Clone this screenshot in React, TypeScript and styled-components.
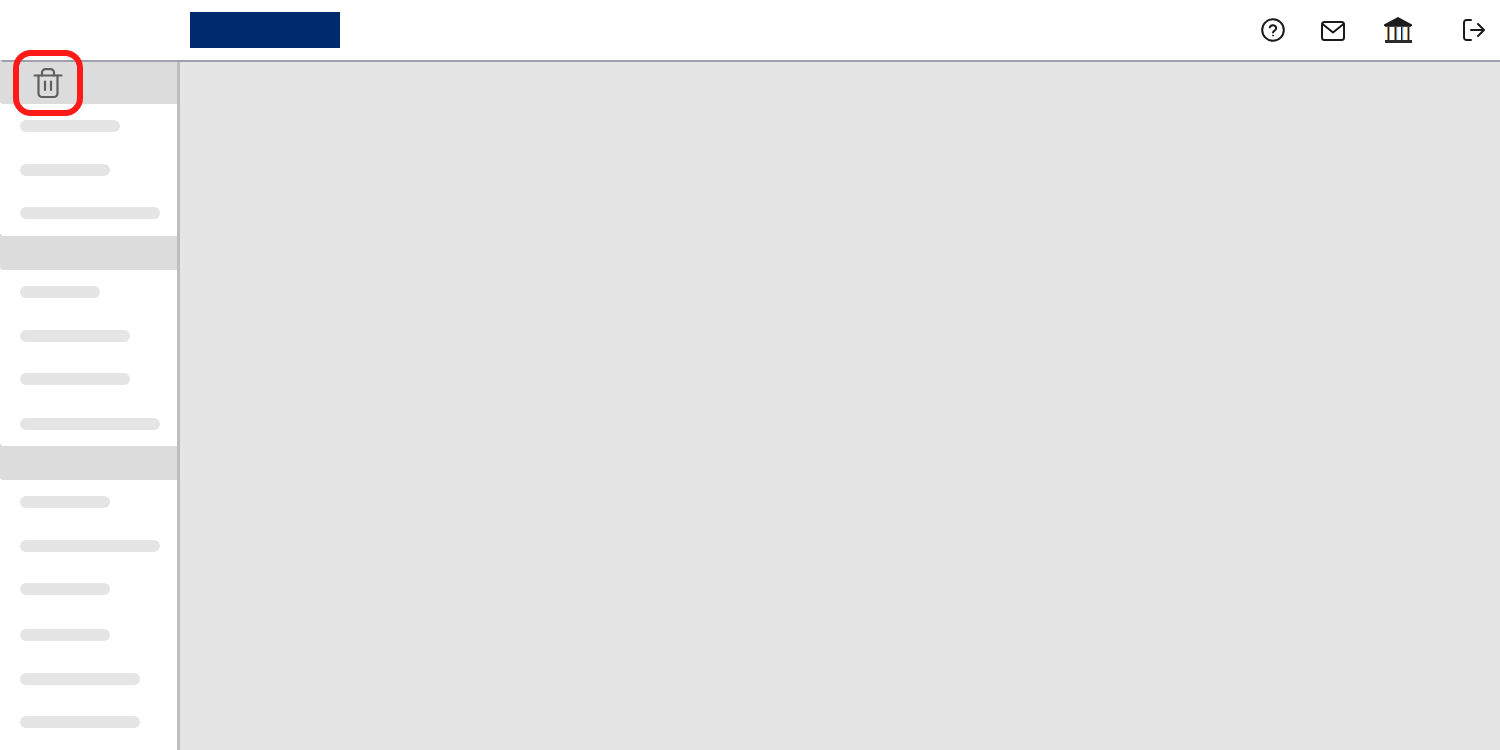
import React from 'react';
import styled, { createGlobalStyle } from 'styled-components';

const GlobalStyle = createGlobalStyle`
  html, body {
    margin: 0;
    padding: 0;
    height: 100%;
    overflow: hidden;
    background: #fff;
    font-family: "Liberation Sans", Arial, sans-serif;
  }
`;

type NavItem = { kind: 'section'; height: number; top: number } | { kind: 'bar'; width: number; top: number };

// top = space left above the item, taken from the previous item
const navItems: NavItem[] = [
  { kind: 'section', height: 42, top: 0 },
  { kind: 'bar', width: 100, top: 16 },
  { kind: 'bar', width: 90, top: 32 },
  { kind: 'bar', width: 140, top: 31 },
  { kind: 'section', height: 34, top: 17 },
  { kind: 'bar', width: 80, top: 16 },
  { kind: 'bar', width: 110, top: 32 },
  { kind: 'bar', width: 110, top: 31 },
  { kind: 'bar', width: 140, top: 33 },
  { kind: 'section', height: 34, top: 16 },
  { kind: 'bar', width: 90, top: 16 },
  { kind: 'bar', width: 140, top: 32 },
  { kind: 'bar', width: 90, top: 31 },
  { kind: 'bar', width: 90, top: 34 },
  { kind: 'bar', width: 120, top: 32 },
  { kind: 'bar', width: 120, top: 31 },
];

const Page = styled.div`
  position: relative;
  width: 1500px;
  height: 750px;
  display: flex;
  flex-direction: column;
  overflow: hidden;
`;

const Header = styled.header`
  flex: none;
  height: 60px;
  display: flex;
  align-items: center;
  padding-left: 190px;
  background: #fff;
  border-bottom: 2px solid #9ca3af;
`;

const Logo = styled.div`
  width: 150px;
  height: 36px;
  background: #002a6e;
`;

const HeaderIcons = styled.div`
  margin-left: auto;
  display: flex;
  align-items: center;
  height: 100%;
`;

const IconSlot = styled.div<{ $width: number; $gap: number }>`
  width: ${(p) => p.$width}px;
  margin-right: ${(p) => p.$gap}px;
  display: flex;
  justify-content: center;
  color: #1a1a1a;
`;

const Body = styled.div`
  flex: 1;
  display: flex;
  min-height: 0;
`;

const Sidebar = styled.nav`
  flex: none;
  width: 177px;
  background: #fff;
  border-right: 3px solid #bdbdbd;
  display: flex;
  flex-direction: column;
`;

const Section = styled.div<{ $height: number; $top: number }>`
  position: relative;
  flex: none;
  height: ${(p) => p.$height}px;
  margin-top: ${(p) => p.$top}px;
  background: #dcdcdc;
  border-radius: 0 0 0 3px;

  &::before {
    content: '';
    position: absolute;
    left: 0;
    top: -2px;
    width: 2px;
    height: 2px;
    background: linear-gradient(to top right, #dcdcdc 50%, transparent 50%);
  }
`;

const Bar = styled.div<{ $width: number; $top: number }>`
  flex: none;
  width: ${(p) => p.$width}px;
  height: 12px;
  margin-top: ${(p) => p.$top}px;
  margin-left: 20px;
  background: #e5e5e5;
  border-radius: 6px;
`;

const Main = styled.main`
  flex: 1;
  background: #e5e5e5;
`;

const TrashHighlight = styled.div`
  position: absolute;
  left: 13px;
  top: 50px;
  width: 58px;
  height: 54px;
  border: 6px solid #ff1a1a;
  border-radius: 18px;
  display: flex;
  align-items: center;
  justify-content: center;
  color: #5f5f5f;
`;

const QuestionIcon = () => (
  <svg width="26" height="26" viewBox="0 0 26 26" fill="none" stroke="currentColor" strokeWidth="2" strokeLinecap="round">
    <circle cx="13" cy="13" r="10.800" />
    <path d="M9.800 10.400a3.300 3.300 0 0 1 6.400 .9c0 2.100-3.200 2.500-3.200 4.300" />
    <circle cx="13" cy="18.600" r="0.500" fill="currentColor" strokeWidth="1" />
  </svg>
);

const MailIcon = () => (
  <svg width="24" height="22" viewBox="0 0 24 22" fill="none" stroke="currentColor" strokeWidth="2" strokeLinejoin="round" strokeLinecap="round">
    <rect x="1" y="3" width="22" height="18" rx="2.500" />
    <path d="M1.500 5 12 13.500 22.500 5" />
  </svg>
);

const BankIcon = () => (
  <svg width="28" height="28" viewBox="0 0 28 28">
    <path d="M14 1 28 8.500V10H0V8.500Z" fill="#1c1c1c" />
    <rect x="1" y="10" width="26" height="1" fill="#444" />
    <g>
      <rect x="3" y="11" width="1" height="13" fill="#d08a3c" />
      <rect x="4" y="11" width="1.400" height="13" fill="#222" />
      <rect x="10" y="11" width="1" height="13" fill="#d08a3c" />
      <rect x="11" y="11" width="1.400" height="13" fill="#222" />
      <rect x="12.400" y="11" width="0.800" height="13" fill="#3f8fd0" />
      <rect x="17" y="11" width="1.400" height="13" fill="#222" />
      <rect x="18.400" y="11" width="0.800" height="13" fill="#3f8fd0" />
      <rect x="23" y="11" width="1" height="13" fill="#d08a3c" />
      <rect x="24" y="11" width="1.400" height="13" fill="#222" />
    </g>
    <rect x="1" y="24" width="27" height="3" fill="#2b2b2b" />
  </svg>
);

const LogoutIcon = () => (
  <svg width="22" height="24" viewBox="0 0 22 24" fill="none" stroke="currentColor" strokeWidth="2" strokeLinecap="round" strokeLinejoin="round">
    <path d="M8 2H3.500A2.500 2.500 0 0 0 1 4.500v15A2.500 2.500 0 0 0 3.500 22H8" />
    <path d="M8 12h12.800M15 6l6 6-6 6" />
  </svg>
);

const TrashIcon = () => (
  <svg width="30" height="30" viewBox="-0.500 0 30 30" fill="none" stroke="currentColor" strokeWidth="2.200" strokeLinecap="round" strokeLinejoin="round">
    <path d="M1 7.500h27" />
    <path d="M8.500 7.500V4.500A3.300 3.300 0 0 1 11.800 1.200h5.400A3.300 3.300 0 0 1 20.500 4.500v3" />
    <path d="M5 7.500v18A3.500 3.500 0 0 0 8.500 29h12a3.500 3.500 0 0 0 3.500-3.500v-18" />
    <path d="M11.500 13.500v8.500M17.500 13.500v8.500" />
  </svg>
);

export default function App() {
  return (
    <Page>
      <GlobalStyle />
      <Header>
        <Logo />
        <HeaderIcons>
          <IconSlot $width={26} $gap={35}><QuestionIcon /></IconSlot>
          <IconSlot $width={24} $gap={39}><MailIcon /></IconSlot>
          <IconSlot $width={28} $gap={51}><BankIcon /></IconSlot>
          <IconSlot $width={22} $gap={15}><LogoutIcon /></IconSlot>
        </HeaderIcons>
      </Header>
      <Body>
        <Sidebar>
          {navItems.map((item, i) =>
            item.kind === 'section' ? (
              <Section key={i} $height={item.height} $top={item.top} />
            ) : (
              <Bar key={i} $width={item.width} $top={item.top} />
            )
          )}
        </Sidebar>
        <Main />
      </Body>
      <TrashHighlight>
        <TrashIcon />
      </TrashHighlight>
    </Page>
  );
}
